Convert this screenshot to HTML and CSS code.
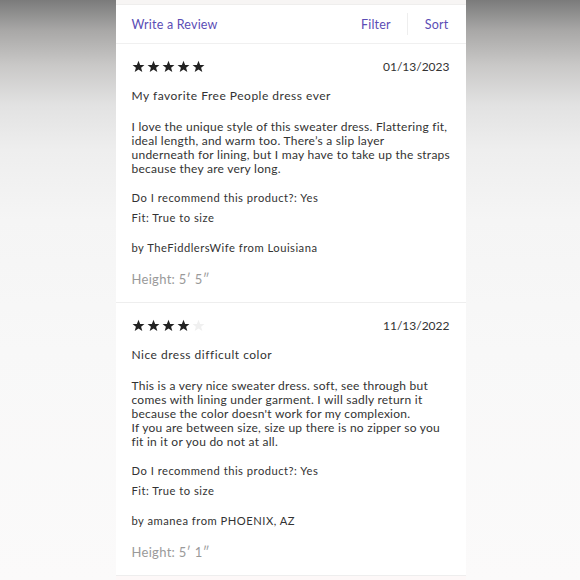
FILE: index.html
```html
<!DOCTYPE html>
<html>
<head>
<meta charset="utf-8">
<link rel="stylesheet" href="styles.css">
</head>
<body>
<div class="panel">
  <div class="topstrip"></div>
  <div class="toolbar">
    <span class="link">Write a Review</span>
    <div class="tools">
      <span class="link">Filter</span>
      <span class="divider"></span>
      <span class="link">Sort</span>
    </div>
  </div>

  <div class="review">
    <div class="head">
      <div class="stars">
        <svg class="star" viewBox="0 0 24 24"><polygon points="12,1.5 15,9 23,9.3 16.8,14.3 19,22.2 12,17.6 5,22.2 7.2,14.3 1,9.3 9,9"/></svg>
        <svg class="star" viewBox="0 0 24 24"><polygon points="12,1.5 15,9 23,9.3 16.8,14.3 19,22.2 12,17.6 5,22.2 7.2,14.3 1,9.3 9,9"/></svg>
        <svg class="star" viewBox="0 0 24 24"><polygon points="12,1.5 15,9 23,9.3 16.8,14.3 19,22.2 12,17.6 5,22.2 7.2,14.3 1,9.3 9,9"/></svg>
        <svg class="star" viewBox="0 0 24 24"><polygon points="12,1.5 15,9 23,9.3 16.8,14.3 19,22.2 12,17.6 5,22.2 7.2,14.3 1,9.3 9,9"/></svg>
        <svg class="star" viewBox="0 0 24 24"><polygon points="12,1.5 15,9 23,9.3 16.8,14.3 19,22.2 12,17.6 5,22.2 7.2,14.3 1,9.3 9,9"/></svg>
      </div>
      <span class="date">01/13/2023</span>
    </div>
    <div class="title">My favorite Free People dress ever</div>
    <p class="body">I love the unique style of this sweater dress. Flattering fit, ideal length, and warm too. There’s a slip layer<br>underneath for lining, but I may have to take up the straps because they are very long.</p>
    <div class="meta">Do I recommend this product?: Yes</div>
    <div class="meta">Fit: True to size</div>
    <div class="meta author">by TheFiddlersWife from Louisiana</div>
    <div class="height">Height: 5′ 5″</div>
  </div>

  <div class="review">
    <div class="head">
      <div class="stars">
        <svg class="star" viewBox="0 0 24 24"><polygon points="12,1.5 15,9 23,9.3 16.8,14.3 19,22.2 12,17.6 5,22.2 7.2,14.3 1,9.3 9,9"/></svg>
        <svg class="star" viewBox="0 0 24 24"><polygon points="12,1.5 15,9 23,9.3 16.8,14.3 19,22.2 12,17.6 5,22.2 7.2,14.3 1,9.3 9,9"/></svg>
        <svg class="star" viewBox="0 0 24 24"><polygon points="12,1.5 15,9 23,9.3 16.8,14.3 19,22.2 12,17.6 5,22.2 7.2,14.3 1,9.3 9,9"/></svg>
        <svg class="star" viewBox="0 0 24 24"><polygon points="12,1.5 15,9 23,9.3 16.8,14.3 19,22.2 12,17.6 5,22.2 7.2,14.3 1,9.3 9,9"/></svg>
        <svg class="star empty" viewBox="0 0 24 24"><polygon points="12,1.5 15,9 23,9.3 16.8,14.3 19,22.2 12,17.6 5,22.2 7.2,14.3 1,9.3 9,9"/></svg>
      </div>
      <span class="date">11/13/2022</span>
    </div>
    <div class="title">Nice dress difficult color</div>
    <p class="body">This is a very nice sweater dress. soft, see through but comes with lining under garment. I will sadly return it because the color doesn't work for my complexion.<br>If you are between size, size up there is no zipper so you fit in it or you do not at all.</p>
    <div class="meta">Do I recommend this product?: Yes</div>
    <div class="meta">Fit: True to size</div>
    <div class="meta author">by amanea from PHOENIX, AZ</div>
    <div class="height">Height: 5′ 1″</div>
  </div>
  <div class="bottomstrip"></div>
</div>
</body>
</html>
```

FILE: styles.css
```css
* { box-sizing: border-box; }
html, body { margin: 0; padding: 0; }
body {
  width: 580px;
  height: 580px;
  overflow: hidden;
  display: flex;
  justify-content: center;
  padding-left: 1px;
  font-family: Lato, "Open Sans", sans-serif;
  color: #333;
  background: linear-gradient(to bottom, #7b7b7b 0px, #a8a7a6 30px, #c9c8c7 65px, #e2e2e2 105px, #eeeeee 150px, #f5f5f5 220px, #f8f8f8 350px, #fbfafa 580px);
}
.panel {
  width: 350px;
  height: 580px;
  background: #fff;
  display: flex;
  flex-direction: column;
}
.topstrip {
  height: 5px;
  background: #f7f5f4;
  border-bottom: 1px solid #efeeed;
}
.toolbar {
  height: 39px;
  display: flex;
  align-items: center;
  justify-content: space-between;
  padding: 0 17px 0 16px;
  border-bottom: 1px solid #f0f0f0;
}
.link {
  color: #5b4db5;
  font-size: 12.5px;
  letter-spacing: 0.2px;
}
.tools {
  display: flex;
  align-items: center;
}
.divider {
  width: 1px;
  height: 22px;
  background: #eeeeee;
  margin: 0 17px 0 16px;
}
.review {
  padding: 15px 15px 13px 16px;
  border-bottom: 1px solid #eeeeee;
}
.head {
  display: flex;
  justify-content: space-between;
  align-items: center;
  height: 14px;
  padding-right: 1px;
}
.stars {
  display: flex;
  gap: 2px;
}
.star {
  width: 13px;
  height: 13px;
  fill: #222;
}
.star.empty { fill: #f0f0f0; }
.date {
  font-size: 12px;
  letter-spacing: 0px;
  color: #333;
}
.title {
  margin-top: 15px;
  font-size: 12px;
  line-height: 16px;
  letter-spacing: 0.5px;
}
.body {
  margin: 16px 0 12px 0;
  font-size: 12px;
  line-height: 14px;
  letter-spacing: 0.25px;
}
.meta {
  font-size: 11.2px;
  line-height: 20px;
  letter-spacing: 0.5px;
}
.author { margin-top: 10px; }
.height {
  margin-top: 11px;
  font-size: 13px;
  line-height: 20px;
  color: #9a9a9a;
  letter-spacing: 0.3px;
}
.bottomstrip {
  flex: 1;
  background: #fdf8f8;
}
```
